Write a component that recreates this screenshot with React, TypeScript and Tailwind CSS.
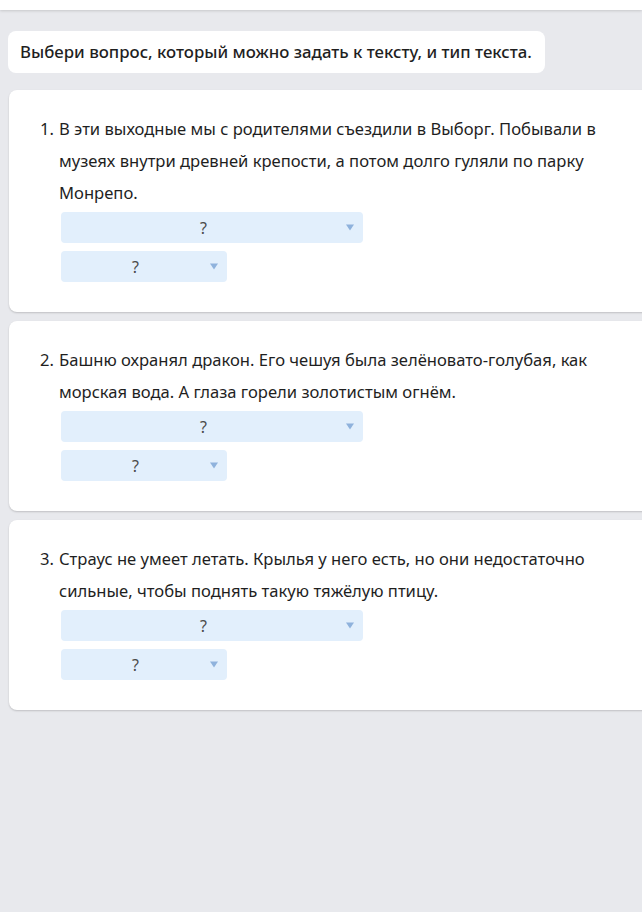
import React from "react";

const tasks = [
  {
    n: 1,
    text: "В эти выходные мы с родителями съездили в Выборг. Побывали в музеях внутри древней крепости, а потом долго гуляли по парку Монрепо.",
  },
  {
    n: 2,
    text: "Башню охранял дракон. Его чешуя была зелёновато-голубая, как морская вода. А глаза горели золотистым огнём.",
  },
  {
    n: 3,
    text: "Страус не умеет летать. Крылья у него есть, но они недостаточно сильные, чтобы поднять такую тяжёлую птицу.",
  },
];

function Select({ wide }: { wide?: boolean }) {
  return (
    <div
      className={`flex h-[31px] items-center rounded-[4px] bg-[#e2effc] pr-[9px] ${
        wide ? "w-[302px]" : "w-[166px]"
      }`}
    >
      <span className="flex-1 text-center text-[16px] text-[#4a4a4a]">?</span>
      <svg width="8" height="7" viewBox="0 0 8 7" className="shrink-0">
        <path d="M0 0.5h8L4 6.5z" fill="#8fb2dc" />
      </svg>
    </div>
  );
}

function TaskCard({ n, text }: { n: number; text: string }) {
  return (
    <div className="ml-[9px] w-[660px] rounded-[8px] bg-white pl-[31px] pt-[23px] pb-[30px] shadow-[0_1px_2px_rgba(0,0,0,0.18)]">
      <div className="flex w-[600px] text-[16.6px] leading-[32px] text-[#1f1f1f]">
        <span className="w-[19px] shrink-0">{n}.</span>
        <p>{text}</p>
      </div>
      <div className="ml-[21px] mt-[3px] flex flex-col gap-[8px]">
        <Select wide />
        <Select />
      </div>
    </div>
  );
}

export default function App() {
  return (
    <div
      className="h-[912px] w-[642px] overflow-hidden bg-[#e8e9ed]"
      style={{ fontFamily: '"Noto Sans", "Open Sans", sans-serif' }}
    >
      <div className="h-[10px] bg-white shadow-[0_1px_3px_rgba(0,0,0,0.15)]" />
      <div className="ml-[8px] mt-[21px] inline-flex h-[42px] items-center rounded-[8px] bg-white pl-[12px] pr-[13px] text-[16.8px] font-medium text-[#1f1f1f]">
        Выбери вопрос, который можно задать к тексту, и тип текста.
      </div>
      <div className="mt-[17px] flex flex-col gap-[9px]">
        {tasks.map((t) => (
          <TaskCard key={t.n} n={t.n} text={t.text} />
        ))}
      </div>
    </div>
  );
}
